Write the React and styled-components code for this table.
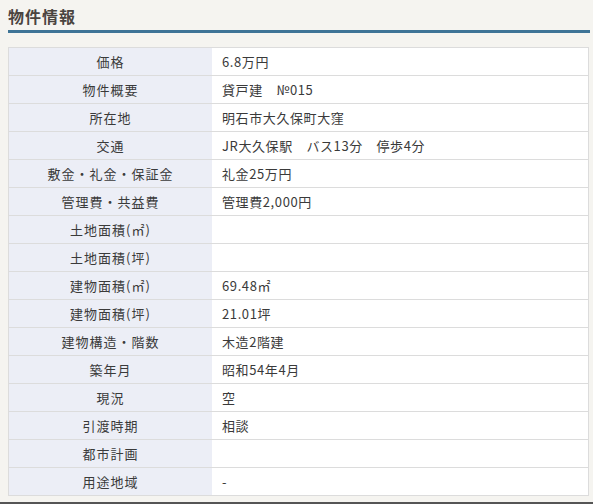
import React from "react";
import styled, { createGlobalStyle } from "styled-components";

const GlobalStyle = createGlobalStyle`
  html, body {
    margin: 0;
    padding: 0;
    background-color: #f5f4f0;
    font-family: "Noto Sans CJK JP", "Noto Sans", sans-serif;
  }
`

const Page = styled.div`
  box-sizing: border-box;
  width: 593px;
  height: 504px;
  padding: 0 3px 0 8px;
  border-bottom: 2px solid #555;
  overflow: hidden;
`

const Heading = styled.h2`
  margin: 0;
  padding: 2px 0 0;
  height: 28px;
  font-size: 16px;
  font-weight: bold;
  line-height: 28px;
  letter-spacing: 1px;
  color: #4a4440;
  border-bottom: 3px solid #3e7496;
`

const Table = styled.table`
  width: 581px;
  margin-top: 14px;
  border-collapse: collapse;
  border: 1px solid #dcdcdc;
  font-size: 13px;
  color: #3a3a3a;
  letter-spacing: 0.6px;
`

const Row = styled.tr`
  height: 28px;
  border-bottom: 1px solid #dcdcdc;
`

const Label = styled.th`
  width: 203px;
  padding: 0;
  font-weight: normal;
  text-align: center;
  letter-spacing: 1px;
  background-color: #eceef6;
`

const Value = styled.td`
  padding: 0 0 0 10px;
  background-color: #fff;
`

const rows = [
  ["価格", "6.8万円"],
  ["物件概要", "貸戸建　№015"],
  ["所在地", "明石市大久保町大窪"],
  ["交通", "JR大久保駅　バス13分　停歩4分"],
  ["敷金・礼金・保証金", "礼金25万円"],
  ["管理費・共益費", "管理費2,000円"],
  ["土地面積(㎡)", ""],
  ["土地面積(坪)", ""],
  ["建物面積(㎡)", "69.48㎡"],
  ["建物面積(坪)", "21.01坪"],
  ["建物構造・階数", "木造2階建"],
  ["築年月", "昭和54年4月"],
  ["現況", "空"],
  ["引渡時期", "相談"],
  ["都市計画", ""],
  ["用途地域", "-"],
]

export default function App() {
  return (
    <>
      <GlobalStyle />
      <Page>
        <Heading>物件情報</Heading>
        <Table>
          <tbody>
            {rows.map(([label, value]) => (
              <Row key={label}>
                <Label>{label}</Label>
                <Value>{value}</Value>
              </Row>
            ))}
          </tbody>
        </Table>
      </Page>
    </>
  )
}
